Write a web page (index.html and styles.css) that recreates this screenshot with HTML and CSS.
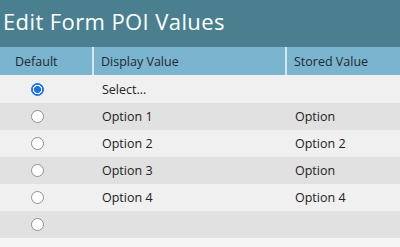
FILE: index.html
```html
<!DOCTYPE html>
<html>
<head>
<meta charset="utf-8">
<link rel="stylesheet" href="styles.css">
</head>
<body>
<div class="dialog">
  <div class="titlebar">Edit Form POI Values</div>
  <table class="grid">
    <thead>
      <tr><th class="c-def">Default</th><th class="c-disp">Display Value</th><th class="c-store">Stored Value</th></tr>
    </thead>
    <tbody>
      <tr class="light"><td class="c-def"><span class="radio checked"></span></td><td>Select...</td><td></td></tr>
      <tr class="dark"><td class="c-def"><span class="radio"></span></td><td>Option 1</td><td>Option</td></tr>
      <tr class="light"><td class="c-def"><span class="radio"></span></td><td>Option 2</td><td>Option 2</td></tr>
      <tr class="dark"><td class="c-def"><span class="radio"></span></td><td>Option 3</td><td>Option</td></tr>
      <tr class="light"><td class="c-def"><span class="radio"></span></td><td>Option 4</td><td>Option 4</td></tr>
      <tr class="dark"><td class="c-def"><span class="radio"></span></td><td></td><td></td></tr>
    </tbody>
  </table>
</div>
</body>
</html>
```
FILE: styles.css
```css
html, body { margin: 0; padding: 0; background: #f5f5f5; }
body { font-family: "Open Sans", "Noto Sans", sans-serif; color: #222; overflow: hidden; }
.dialog { width: 400px; }
.titlebar {
  height: 47px;
  background: #4a7f90;
  color: #fff;
  font-size: 22px;
  letter-spacing: 0.4px;
  line-height: 42px;
  padding-left: 3px;
  box-sizing: border-box;
}
.grid { width: 400px; border-collapse: collapse; table-layout: fixed; }
.grid th {
  height: 28px;
  background: #7bb4ce;
  font-weight: normal;
  font-size: 12.5px;
  text-align: left;
  padding: 0 0 0 7px;
  color: #1e2a30;
  border-left: 2px solid #d4e8f1;
  box-sizing: border-box;
}
.grid th.c-def { border-left: none; padding-left: 15px; }
.c-def { width: 93px; }
.c-disp { width: 193px; }
.grid td {
  height: 27px;
  font-size: 12.5px;
  padding: 0 0 0 9px;
  box-sizing: border-box;
}
.grid td.c-def { padding: 0 0 0 31px; }
.light td { background: #f0f0f0; }
.dark td { background: #e1e1e1; }
tbody tr:first-child td { height: 28px; }
.radio {
  display: block;
  width: 13px;
  height: 13px;
  border-radius: 50%;
  border: 1px solid #8f8f8f;
  background: #fff;
  box-sizing: border-box;
}
.radio.checked {
  border: 1px solid #1a73e8;
  background: radial-gradient(circle, #1a73e8 0 3.3px, #fff 3.8px 4.6px, #1a73e8 5px);
}
```
